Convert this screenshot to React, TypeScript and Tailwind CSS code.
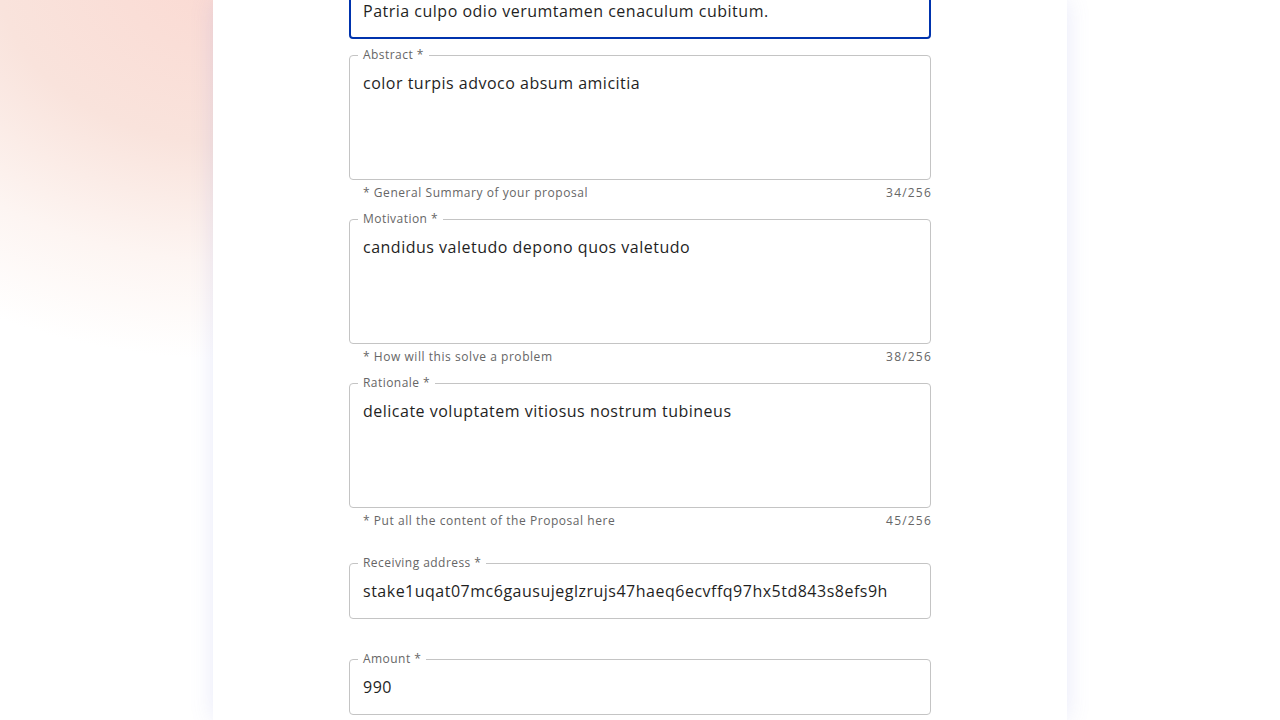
import React from "react";

const FONT = "font-['Open_Sans',sans-serif]";

type FieldProps = {
  label: string;
  value: string;
  rows?: number;
  focused?: boolean;
  helper?: string;
  counter?: string;
  className?: string;
};

function Field({ label, value, rows = 1, focused = false, helper, counter, className = "" }: FieldProps) {
  const contentH = rows * 23;
  return (
    <div className={"flex flex-col " + className}>
      <fieldset
        className={
          "min-w-0 m-0 p-0 rounded-[4px] " +
          (focused ? "border-2 border-[#0033ad]" : "border border-[#c4c4c4]")
        }
      >
        <legend
          className={
            "px-[5px] h-4 text-[12px] leading-4 tracking-[0.45px] " +
            (focused ? "ml-[7px] text-[#0033ad]" : "ml-[8px] text-[#666666]")
          }
        >
          {label}
        </legend>
        <div
          className={
            "text-[16px] leading-[23px] tracking-[0.5px] text-[#1f1f1f] whitespace-pre-wrap " +
            (focused ? "px-[12px] pt-[7.5px] pb-[14.5px]" : "px-[13px] pt-[8.5px] pb-[15.5px]")
          }
          style={{ height: contentH + (focused ? 22 : 24) }}
        >
          {value}
        </div>
      </fieldset>
      {(helper || counter) && (
        <div className="mt-[3px] flex justify-between text-[12px] leading-[20px] tracking-[0.55px] text-[#666666]">
          <span className="ml-[14px]">{helper}</span>
          <span className="-mr-[1px] tracking-[1.2px]">{counter}</span>
        </div>
      )}
    </div>
  );
}

export default function App() {
  return (
    <div
      className={
        "relative h-[720px] w-[1280px] overflow-hidden bg-[#fdfdfd] bg-[radial-gradient(ellipse_540px_390px_at_240px_-30px,#fbd9d2_0%,#f9e3dc_45%,#fdf5f2_75%,#ffffff_100%)] " +
        FONT
      }
    >
      <div className="mx-auto flex h-full w-[854px] justify-center bg-white shadow-[0_0_22px_rgba(110,120,220,0.16)]">
        <div className="mt-[-24px] flex w-[582px] flex-col">
          <Field label="Title *" value="Patria culpo odio verumtamen cenaculum cubitum." focused />
          <Field
            className="mt-[8px]"
            label="Abstract *"
            value="color turpis advoco absum amicitia"
            rows={4}
            helper="* General Summary of your proposal"
            counter="34/256"
          />
          <Field
            className="mt-[8px]"
            label="Motivation *"
            value="candidus valetudo depono quos valetudo"
            rows={4}
            helper="* How will this solve a problem"
            counter="38/256"
          />
          <Field
            className="mt-[8px]"
            label="Rationale *"
            value="delicate voluptatem vitiosus nostrum tubineus"
            rows={4}
            helper="* Put all the content of the Proposal here"
            counter="45/256"
          />
          <Field
            className="mt-[24px]"
            label="Receiving address *"
            value="stake1uqat07mc6gausujeglzrujs47haeq6ecvffq97hx5td843s8efs9h"
          />
          <Field className="mt-[32px]" label="Amount *" value="990" />
        </div>
      </div>
    </div>
  );
}
